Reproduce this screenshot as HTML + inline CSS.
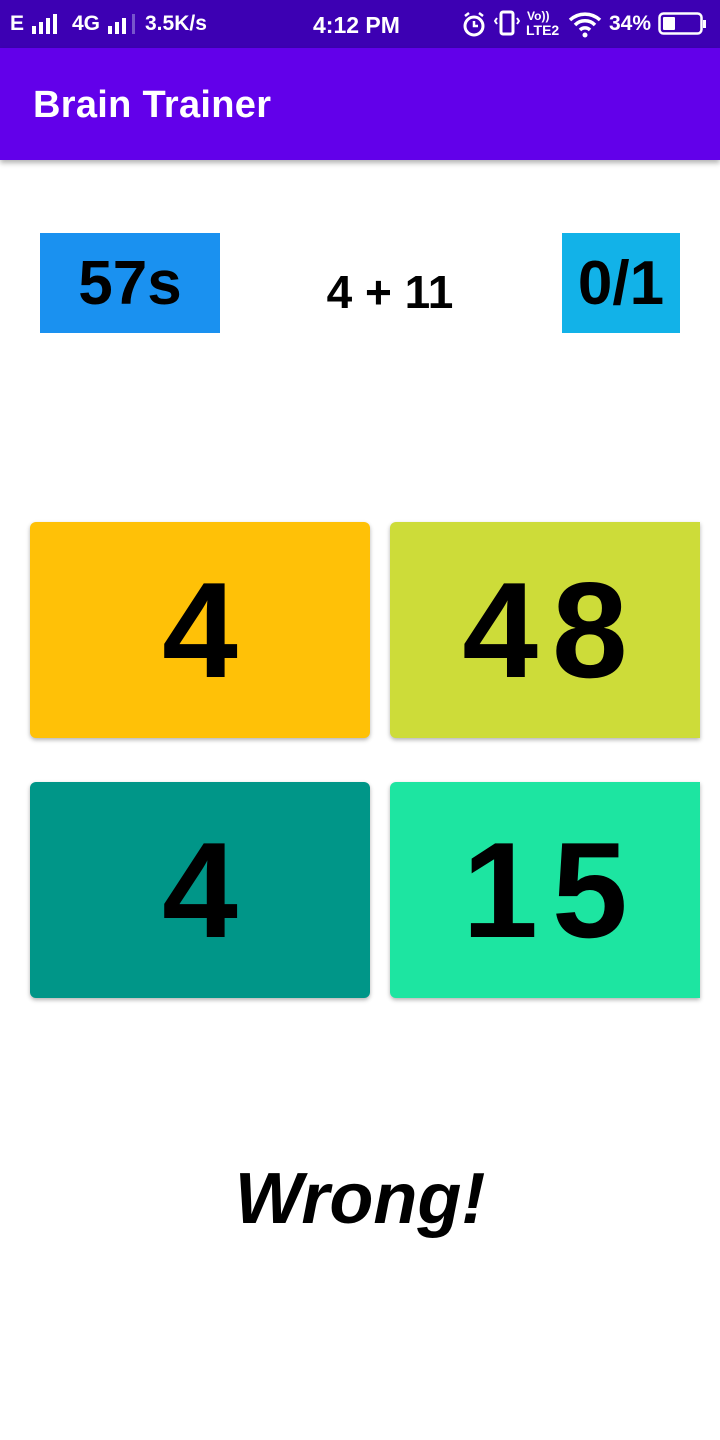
<!DOCTYPE html>
<html><head><meta charset="utf-8"><style>
*{margin:0;padding:0;box-sizing:border-box}
body{width:720px;height:1440px;background:#fff;font-family:"Liberation Sans",sans-serif;position:relative;overflow:hidden}
.sb{position:absolute;top:0;left:0;width:720px;height:48px;background:#3d00b3;color:#fff;font-weight:bold;font-size:21px}
.sb span{position:absolute;top:12px}
.tb{position:absolute;top:48px;left:0;width:720px;height:112px;background:#6200ea;box-shadow:0 3px 5px rgba(0,0,0,.3)}
.tb div{position:absolute;left:33px;top:36px;color:#fff;font-size:38px;font-weight:bold;letter-spacing:.3px}
.box{position:absolute;display:flex;align-items:center;justify-content:center;font-weight:bold;color:#000}
.card{position:absolute;border-radius:6px;box-shadow:0 2px 4px rgba(0,0,0,.3);display:flex;align-items:center;justify-content:center;font-weight:bold;font-size:136px;letter-spacing:14px;padding-left:14px;color:#000}
</style></head><body>
<div class="sb">
<span style="left:10px">E</span>
<svg style="position:absolute;left:32px;top:14px" width="30" height="22"><rect x="0" y="12" width="4" height="8" fill="#fff"/><rect x="7" y="8" width="4" height="12" fill="#fff"/><rect x="14" y="4" width="4" height="16" fill="#fff"/><rect x="21" y="0" width="4" height="20" fill="#fff"/></svg>
<span style="left:72px">4G</span>
<svg style="position:absolute;left:108px;top:14px" width="30" height="22"><rect x="0" y="12" width="4" height="8" fill="#fff"/><rect x="7" y="8" width="4" height="12" fill="#fff"/><rect x="14" y="4" width="4" height="16" fill="#fff"/><rect x="24" y="0" width="3" height="20" fill="#7755cc"/></svg>
<span style="left:145px">3.5K/s</span>
<span style="left:313px;font-size:23px">4:12 PM</span>
<svg style="position:absolute;left:462px;top:12px" width="26" height="26"><circle cx="12" cy="14" r="9" stroke="#fff" stroke-width="3" fill="none"/><path d="M12 9v5h4M3 4l4-3M21 4l-4-3" stroke="#fff" stroke-width="2.5" fill="none"/></svg>
<svg style="position:absolute;left:494px;top:10px" width="26" height="28"><rect x="7" y="2" width="12" height="22" rx="2" stroke="#fff" stroke-width="3" fill="none"/><path d="M3 8l-2 3 2 3M23 8l2 3-2 3" stroke="#fff" stroke-width="2" fill="none"/></svg>
<span style="left:527px;top:9px;font-size:12px">Vo))</span><span style="left:526px;top:22px;font-size:14px">LTE2</span>
<svg style="position:absolute;left:568px;top:12px" width="36" height="26"><path d="M2 8a22 22 0 0 1 30 0M7 13a14 14 0 0 1 20 0M12 18a7 7 0 0 1 10 0" stroke="#fff" stroke-width="3.5" fill="none"/><circle cx="17" cy="23" r="2.5" fill="#fff"/></svg>
<span style="left:609px">34%</span>
<svg style="position:absolute;left:658px;top:12px" width="50" height="24"><rect x="1.5" y="1.5" width="42" height="20" rx="4" stroke="#fff" stroke-width="2.5" fill="none"/><rect x="5" y="5" width="12" height="13" rx="1" fill="#fff"/><rect x="45" y="8" width="3" height="8" fill="#fff"/></svg>
</div>
<div class="tb"><div>Brain Trainer</div></div>
<div class="box" style="left:40px;top:233px;width:180px;height:100px;background:#1a91f0;font-size:62px">57s</div>
<div class="box" style="left:300px;top:262px;width:180px;height:60px;font-size:46px">4 + 11</div>
<div class="box" style="left:562px;top:233px;width:118px;height:100px;background:#12b2e8;font-size:62px">0/1</div>
<div class="card" style="left:30px;top:522px;width:340px;height:216px;background:#ffc107">4</div>
<div class="card" style="left:390px;top:522px;width:310px;height:216px;background:#cddc39;border-radius:6px 0 0 6px">48</div>
<div class="card" style="left:30px;top:782px;width:340px;height:216px;background:#009688">4</div>
<div class="card" style="left:390px;top:782px;width:310px;height:216px;background:#1de5a1;border-radius:6px 0 0 6px">15</div>
<div style="position:absolute;left:0;width:720px;top:1158px;text-align:center;font-size:72px;font-weight:bold;font-style:italic">Wrong!</div>
</body></html>
